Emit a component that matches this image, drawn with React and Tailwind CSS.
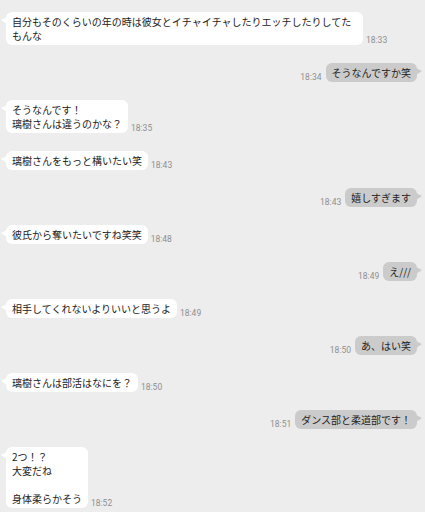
const messages = [
  { side: 'left', text: '自分もそのくらいの年の時は彼女とイチャイチャしたりエッチしたりしてたもんな', time: '18:33' },
  { side: 'right', text: 'そうなんですか笑', time: '18:34' },
  { side: 'left', text: 'そうなんです！\n璃樹さんは違うのかな？', time: '18:35' },
  { side: 'left', text: '璃樹さんをもっと構いたい笑', time: '18:43' },
  { side: 'right', text: '嬉しすぎます', time: '18:43' },
  { side: 'left', text: '彼氏から奪いたいですね笑笑', time: '18:48' },
  { side: 'right', text: 'え///', time: '18:49' },
  { side: 'left', text: '相手してくれないよりいいと思うよ', time: '18:49' },
  { side: 'right', text: 'あ、はい笑', time: '18:50' },
  { side: 'left', text: '璃樹さんは部活はなにを？', time: '18:50' },
  { side: 'right', text: 'ダンス部と柔道部です！', time: '18:51' },
  { side: 'left', text: '2つ！？\n大変だね\n\n身体柔らかそう', time: '18:52' },
]

function Time({ value }) {
  return (
    <span className="text-[8.5px] leading-[10px] text-[#8f8f8f] font-['Roboto',sans-serif] shrink-0">
      {value}
    </span>
  )
}

function Bubble({ side, text }) {
  const mine = side === 'right'
  return (
    <div
      className={`relative max-w-[357px] rounded-[6px] px-[6px] py-[2.5px] text-[10px] leading-[14px] text-[#222] whitespace-pre-wrap font-['Noto_Sans_CJK_JP','Noto_Sans',sans-serif] ${
        mine ? 'bg-[#cbcbcb]' : 'bg-white'
      }`}
    >
      {/* tail */}
      {mine ? (
        <svg className="absolute top-[5px] right-[-5px]" width="6" height="8" viewBox="0 0 6 8">
          <polygon points="0,0 6,3 0,7" fill="#cbcbcb" />
        </svg>
      ) : (
        <svg className="absolute top-[5px] left-[-5px]" width="6" height="8" viewBox="0 0 6 8">
          <polygon points="6,0 0,3 6,7" fill="#ffffff" />
        </svg>
      )}
      {text}
    </div>
  )
}

export default function App() {
  return (
    <div className="w-[425px] h-[512px] overflow-hidden bg-[#ededed]">
      <div className="flex flex-col gap-[18px] pt-[12px]">
        {messages.map((m, i) =>
          m.side === 'left' ? (
            <div key={i} className="flex items-end pl-[6px] gap-[3px]">
              <Bubble side="left" text={m.text} />
              <Time value={m.time} />
            </div>
          ) : (
            <div key={i} className="flex items-end justify-end pr-[8px] gap-[4px]">
              <Time value={m.time} />
              <Bubble side="right" text={m.text} />
            </div>
          )
        )}
      </div>
    </div>
  )
}
